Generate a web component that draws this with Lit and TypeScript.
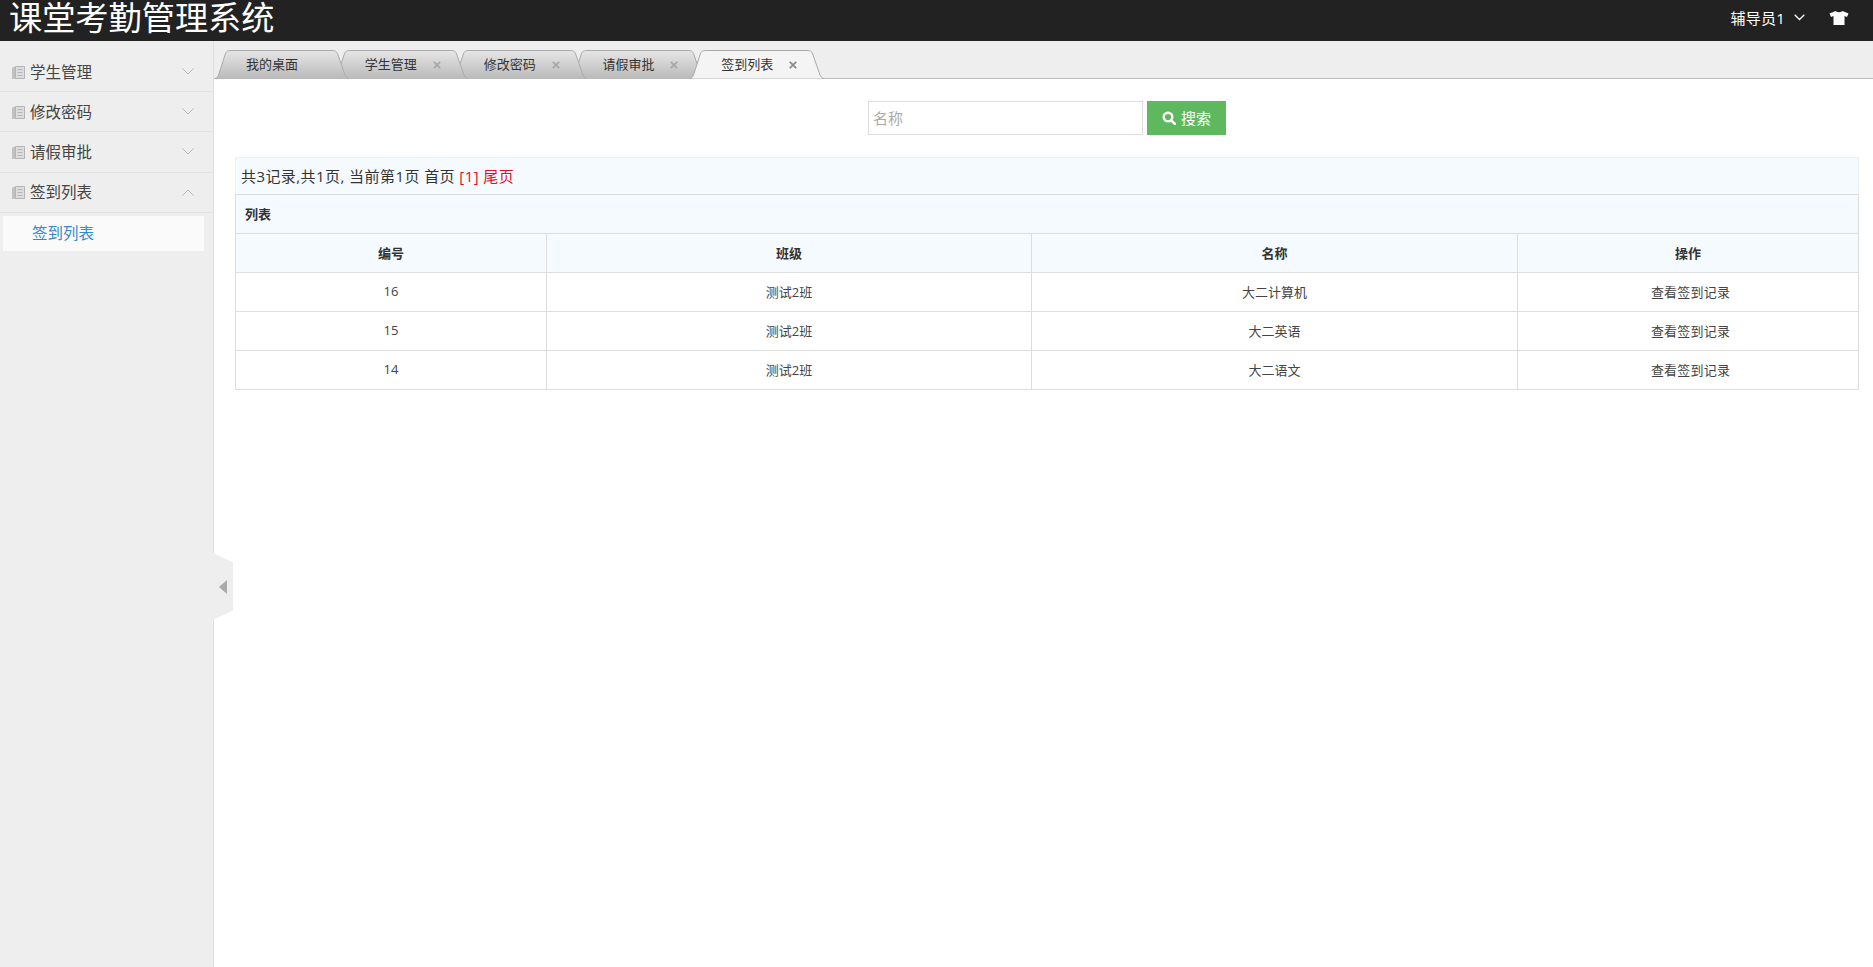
import { LitElement, html, css, svg } from "lit";
import { customElement } from "lit/decorators.js";

const MENU = [
  { name: "学生管理", open: false },
  { name: "修改密码", open: false },
  { name: "请假审批", open: false },
  { name: "签到列表", open: true, sub: ["签到列表"] },
];

const TABS = [
  { name: "我的桌面", close: false },
  { name: "学生管理", close: true },
  { name: "修改密码", close: true },
  { name: "请假审批", close: true },
  { name: "签到列表", close: true, active: true },
];

const ROWS = [
  { id: 16, cls: "测试2班", name: "大二计算机" },
  { id: 15, cls: "测试2班", name: "大二英语" },
  { id: 14, cls: "测试2班", name: "大二语文" },
];

const tabShape = (active: boolean) => svg`
  <svg class="tab-bg" viewBox="0 0 134 29" preserveAspectRatio="none">
    <defs>
      <linearGradient id="tab-off" x1="0" y1="0" x2="0" y2="1">
        <stop offset="0" stop-color="#e6e6e6"></stop>
        <stop offset="1" stop-color="#bababa"></stop>
      </linearGradient>
    </defs>
    <path
      d="M0 28.500C1.500 28.500 2.500 27 3.500 25L10 5C11 1.500 12.500 .5 16 .5L117 .5C120.500 .5 122 1.500 123 5L130 25C131 27 132 28.500 134 28.500"
      fill=${active ? "#f4f4f4" : "url(#tab-off)"}
      stroke="#aaa"
    ></path>
  </svg>
`;

@customElement("app-root")
export class AppRoot extends LitElement {
  static styles = css`
    :host {
      display: block;
      height: 100vh;
      overflow: hidden;
      font-family: "Open Sans", "Noto Sans CJK SC", sans-serif;
      color: #333;
      background: #fff;
    }

    .page {
      display: flex;
      flex-direction: column;
      height: 100%;
      position: relative;
    }

    .top {
      flex: none;
      height: 41px;
      background: #222;
      color: #fff;
      display: flex;
      align-items: center;
      justify-content: space-between;
      padding: 0 24px 0 9px;
    }

    .logo {
      align-self: flex-start;
      font-size: 33.2px;
      line-height: 36px;
    }

    .user {
      display: flex;
      align-items: center;
      font-size: 15px;
      letter-spacing: 0.2px;
      margin-bottom: 7px;
    }

    .user .down {
      width: 11px;
      height: 7px;
      margin: 1px 24px 0 9px;
    }

    .user .shirt {
      width: 20px;
      height: 14px;
      margin-top: 2px;
    }

    .body {
      flex: 1;
      display: flex;
      min-height: 0;
    }

    .side {
      flex: none;
      width: 213px;
      background: #eee;
      border-right: 1px solid #e0e0e0;
      padding-top: 11px;
    }

    .menu-row {
      box-sizing: border-box;
      height: 40.2px;
      display: flex;
      align-items: center;
      padding: 0 19px 0 12px;
      border-bottom: 1px solid #e3e3e3;
      font-size: 15.5px;
      color: #444;
    }

    .menu-row .book {
      width: 13px;
      height: 13px;
      margin: 1px 5px 0 0;
    }

    .menu-row span {
      flex: 1;
      padding-bottom: 1px;
    }

    .menu-row .arrow {
      width: 12px;
      height: 7px;
    }

    .sub {
      margin: 3px 9px 0 3px;
      height: 35px;
      line-height: 35px;
      padding-left: 29px;
      background: #fafafa;
      font-size: 15.5px;
      color: #3089cf;
    }

    .main {
      flex: 1;
      min-width: 0;
      display: flex;
      flex-direction: column;
    }

    .tabs {
      flex: none;
      height: 38px;
      box-sizing: border-box;
      padding: 9px 0 0 1px;
      background: #eee;
      border-bottom: 1px solid #bbb;
      display: flex;
    }

    .tab {
      position: relative;
      flex: none;
      box-sizing: border-box;
      width: 134px;
      height: 29px;
      margin-right: -15.2px;
      padding: 0 0 2px 31px;
      display: flex;
      align-items: center;
      font-size: 13px;
      color: #333;
    }

    .tab-bg {
      position: absolute;
      inset: 0;
      width: 100%;
      height: 100%;
    }

    .tab b,
    .tab .close {
      position: relative;
    }

    .tab b {
      font-weight: 400;
    }

    .tab .close {
      width: 8px;
      height: 8px;
      margin: 2px 0 0 16px;
      stroke: #a8a8a8;
    }

    .tab.on .close {
      stroke: #8c8c8c;
    }

    .content {
      padding: 22px 14px 0 21px;
    }

    .search {
      display: flex;
      justify-content: center;
      gap: 4px;
      height: 34px;
    }

    .search input {
      box-sizing: border-box;
      width: 275px;
      height: 34px;
      padding: 0 4px;
      border: 1px solid #ddd;
      outline: none;
      font: inherit;
      font-size: 15px;
      color: #333;
    }

    .search input::placeholder {
      color: #aaa;
    }

    .search button {
      box-sizing: border-box;
      width: 79px;
      height: 34px;
      border: 0;
      padding: 0 0 2px;
      background: #5eb95e;
      color: #fff;
      font: inherit;
      font-size: 15px;
      display: flex;
      align-items: center;
      justify-content: center;
      gap: 5px;
    }

    .search button svg {
      width: 14px;
      height: 14px;
      margin-top: 2px;
    }

    .pager {
      box-sizing: border-box;
      margin-top: 22px;
      height: 37px;
      line-height: 36px;
      padding-left: 5px;
      background: #f5fafe;
      border: 1px solid #eef1f4;
      border-bottom: 0;
      font-size: 15px;
      letter-spacing: 0.43px;
      white-space: pre;
    }

    .pager em {
      font-style: normal;
      color: #dd1122;
    }

    table {
      width: 100%;
      table-layout: fixed;
      border-collapse: collapse;
      font-size: 13px;
    }

    th,
    td {
      height: 39px;
      padding: 0 0 2px;
      border: 1px solid #ddd;
      box-sizing: border-box;
      text-align: center;
      font-weight: 400;
      color: #444;
    }

    th {
      background: #f5fafe;
      font-weight: 700;
      color: #333;
    }

    th.caption {
      text-align: left;
      padding-left: 9px;
    }

    td.action {
      padding-left: 5px;
      letter-spacing: 0.2px;
    }

    .handle {
      position: absolute;
      left: 213px;
      top: 553px;
      width: 20px;
      height: 67px;
      background: #eee;
      clip-path: polygon(0 0, 100% 14%, 100% 86%, 0 100%);
      display: flex;
      align-items: center;
      justify-content: center;
    }

    .handle svg {
      width: 8px;
      height: 14px;
    }
  `;

  render() {
    return html`
      <div class="page">
        <div class="top">
          <div class="logo">课堂考勤管理系统</div>
          <div class="user">
            辅导员1
            <svg class="down" viewBox="0 0 11 7">
              <path d="M.7.7 5.500 5.500 10.300.7" fill="none" stroke="#fff" stroke-width="1.300"></path>
            </svg>
            <svg class="shirt" viewBox="0 0 19 14">
              <path
                d="M6 0C7 1.500 12 1.500 13 0L19 2.500 17.500 6 15 5V14H4V5L1.500 6 0 2.500Z"
                fill="#fff"
              ></path>
            </svg>
          </div>
        </div>
        <div class="body">
          <div class="side">
            ${MENU.map(
              (m) => html`
                <div class="menu-row">
                  <svg class="book" viewBox="0 0 13 13">
                    <path d="M0 1.500 3 .5V13H0Z" fill="#c2c2c2"></path>
                    <path
                      d="M3.500.5H12.500V12.500H3.500ZM5.500 3.500H10.500M5.500 6.500H10.500M5.500 9.500H10.500"
                      fill="#dedede"
                      stroke="#b4b4b4"
                    ></path>
                  </svg>
                  <span>${m.name}</span>
                  <svg class="arrow" viewBox="0 0 12 7">
                    <path
                      d=${m.open ? "M.5 6.500 6 1 11.500 6.500" : "M.5.5 6 6 11.500.5"}
                      fill="none"
                      stroke="#bbb"
                    ></path>
                  </svg>
                </div>
                ${(m.sub || []).map((s) => html`<div class="sub">${s}</div>`)}
              `
            )}
          </div>
          <div class="main">
            <div class="tabs">
              ${TABS.map(
                (t, i) => html`
                  <div
                    class="tab ${t.active ? "on" : ""}"
                    style="z-index: ${t.active ? 10 : 9 - i}"
                  >
                    ${tabShape(!!t.active)}
                    <b>${t.name}</b>
                    ${t.close
                      ? html`<svg class="close" viewBox="0 0 8 8">
                          <path d="M.8.8 7.200 7.200M7.200.8 .8 7.200" stroke-width="1.800"></path>
                        </svg>`
                      : ""}
                  </div>
                `
              )}
            </div>
            <div class="content">
              <div class="search">
                <input placeholder="名称" />
                <button>
                  <svg viewBox="0 0 14 14">
                    <circle cx="6" cy="6" r="4.300" fill="none" stroke="#fff" stroke-width="2.400"></circle>
                    <path d="M9.300 9.300 12.800 12.800" stroke="#fff" stroke-width="2.600" stroke-linecap="round"></path>
                  </svg>
                  搜索
                </button>
              </div>
              <div class="pager">共3记录,共1页, 当前第1页 首页 <em>[1] 尾页</em></div>
              <table>
                <colgroup>
                  <col style="width: 311px" />
                  <col style="width: 485px" />
                  <col style="width: 486px" />
                  <col />
                </colgroup>
                <tr><th class="caption" colspan="4">列表</th></tr>
                <tr><th>编号</th><th>班级</th><th>名称</th><th>操作</th></tr>
                ${ROWS.map(
                  (r) => html`
                    <tr>
                      <td>${r.id}</td>
                      <td>${r.cls}</td>
                      <td>${r.name}</td>
                      <td class="action">查看签到记录</td>
                    </tr>
                  `
                )}
              </table>
            </div>
          </div>
        </div>
        <div class="handle">
          <svg viewBox="0 0 8 14"><path d="M8 0V14L0 7Z" fill="#aaa"></path></svg>
        </div>
      </div>
    `;
  }
}
